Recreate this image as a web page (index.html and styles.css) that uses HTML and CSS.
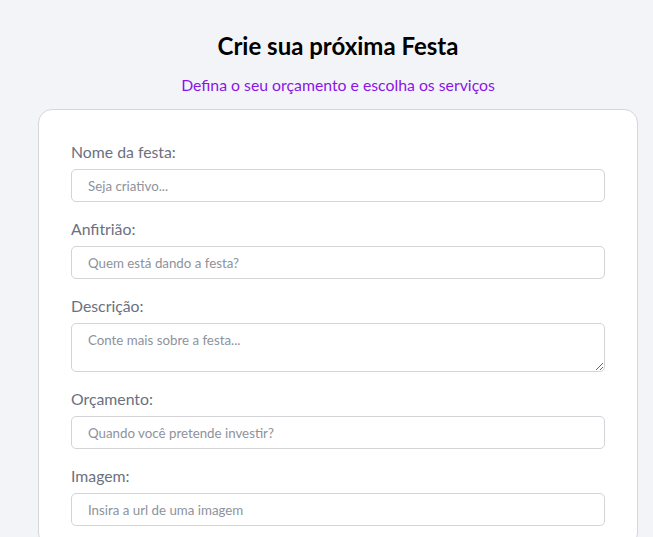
FILE: index.html
```html
<!DOCTYPE html>
<html lang="pt-BR">
<head>
<meta charset="utf-8">
<title>Criar Festa</title>
<link rel="stylesheet" href="styles.css">
</head>
<body>
<main class="page">
  <header class="page-header">
    <h1 class="title">Crie sua próxima Festa</h1>
    <p class="subtitle">Defina o seu orçamento e escolha os serviços</p>
  </header>
  <form class="card">
    <div class="field">
      <label class="label" for="nome">Nome da festa:</label>
      <input class="input" id="nome" type="text" placeholder="Seja criativo...">
    </div>
    <div class="field">
      <label class="label" for="anfitriao">Anfitrião:</label>
      <input class="input" id="anfitriao" type="text" placeholder="Quem está dando a festa?">
    </div>
    <div class="field">
      <label class="label" for="descricao">Descrição:</label>
      <textarea class="input textarea" id="descricao" placeholder="Conte mais sobre a festa..."></textarea>
    </div>
    <div class="field">
      <label class="label" for="orcamento">Orçamento:</label>
      <input class="input" id="orcamento" type="text" placeholder="Quando você pretende investir?">
    </div>
    <div class="field">
      <label class="label" for="imagem">Imagem:</label>
      <input class="input" id="imagem" type="text" placeholder="Insira a url de uma imagem">
    </div>
  </form>
</main>
</body>
</html>
```
FILE: styles.css
```css
* { box-sizing: border-box; }
html, body {
  margin: 0;
  padding: 0;
  background: #f3f4f8;
  font-family: Lato, "Open Sans", sans-serif;
}
.page {
  width: 600px;
  margin-left: 38px;
  padding-top: 31px;
}
.page-header {
  text-align: center;
}
.title {
  margin: 0;
  font-size: 24px;
  font-weight: 700;
  line-height: 29px;
  color: #000;
}
.subtitle {
  margin: 15px 0 0;
  font-size: 15.8px;
  line-height: 19px;
  color: #8a14e6;
}
.card {
  margin-top: 15px;
  background: #fff;
  border: 1px solid #d6d6d9;
  border-radius: 14px;
  padding: 32px 32px 20px;
  display: flex;
  flex-direction: column;
  gap: 17px;
}
.field {
  display: flex;
  flex-direction: column;
  gap: 8px;
}
.label {
  font-size: 15.8px;
  line-height: 19px;
  color: #6b7080;
}
.input {
  width: 100%;
  height: 33px;
  border: 1px solid #d4d4d8;
  border-radius: 5px;
  padding: 0 16px;
  font-family: Lato, "Open Sans", sans-serif;
  font-size: 13.3px;
  color: #333;
  background: #fff;
}
.input::placeholder {
  color: #8e929c;
}
.textarea {
  height: 49px;
  padding-top: 8px;
  resize: vertical;
}
```
